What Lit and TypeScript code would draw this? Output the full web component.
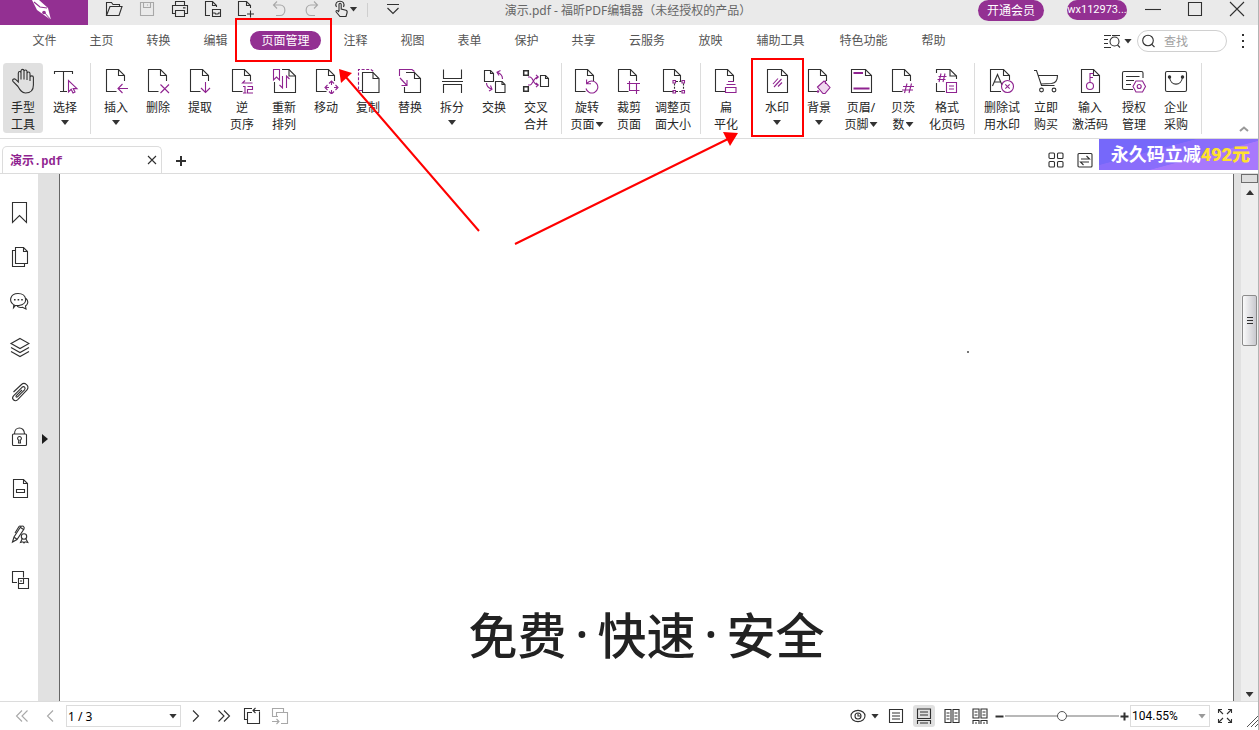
import { LitElement, html, css, svg, nothing, TemplateResult, SVGTemplateResult } from "lit";
import { customElement, state } from "lit/decorators.js";
import { classMap } from "lit/directives/class-map.js";

type Art = SVGTemplateResult;

const icon = (w: number, h: number, art: Art): TemplateResult =>
  html`<svg class="ic" width=${w} height=${h} viewBox="0 0 ${w} ${h}" aria-hidden="true">${art}</svg>`;

/* Sheet of paper whose lower right corner is left open for a badge. */
const openDoc = (x = 4.5, right = x + 18): Art => svg`
  <path d="M${x + 10} 23.5H${x}V1.5H${right - 6}L${right} 7.5V13"/>
  <path d="M${right - 6} 1.5V7.5H${right}"/>`;

/* Closed sheet of paper with a folded corner. */
const doc = (x: number, y: number, w: number, h: number, f = 6): Art => svg`
  <path d="M${x} ${y}H${x + w - f}L${x + w} ${y + f}V${y + h}H${x}Z"/>
  <path d="M${x + w - f} ${y}V${y + f}H${x + w}"/>`;

const art: Record<string, Art> = {
  hand: svg`<path d="M9 18.5L4.2 13.6C2.6 11.6 5 10 6.6 11.4L9.3 14V5.2C9.3 3 12 3 12 5.2V11.5V3.2C12 .8 15 .8 15 3.2V11.5V3.6C15 1.4 18 1.4 18 3.6V12V5.8C18 3.4 21 3.6 21 5.8V13V9.4C21 7.4 24.4 7.4 24.4 9.4V17C24.4 22 21.5 25 16.5 25C12.5 25 11 22 9 18.5Z"/>`,
  select: svg`<path d="M3.5 6V3.5H21.5V6M12.5 3.5V23.5M9 23.5H16"/><path class="p" d="M17.5 12.5V24L20.2 21.3L22 25L24 24L22.2 20.6H26Z"/>`,
  insert: svg`${openDoc()}<path class="p" d="M26 20.5H16M20.5 16L16 20.5L20.5 25"/>`,
  remove: svg`${openDoc()}<path class="p" d="M16.5 16.5L25 25M25 16.5L16.5 25"/>`,
  extract: svg`${openDoc()}<path class="p" d="M19.5 14V24.5M15 20L19.5 24.5L24 20"/>`,
  reverse: svg`${openDoc()}<path class="p" d="M17 12.5L14.5 15H24.5M15 18.5H17V25M15 25H18.5M19.5 18.5H24.5V21.5H19.5V25H25"/>`,
  reorder: svg`<path d="M12 1.5H19L25.5 8V24.5H4.5V14"/><path d="M19 1.5V8H25.5"/><path class="p" d="M3.5 1.5H9.5V12L6.5 9L3.5 12ZM12.5 8V20L9.5 17M16.5 20V8L19.5 11"/>`,
  move: svg`${openDoc()}<path class="p" d="M17 15.5L19.5 13L22 15.5M17 23.5L19.5 26L22 23.5M15.5 17L13 19.5L15.5 22M23.5 17L26 19.5L23.5 22M19.5 14V17M19.5 22V25M14 19.5H17M22 19.5H25"/>`,
  copy: svg`<path class="p" stroke-dasharray="3 1.6" d="M8 22.5H4.5V1.5H17L20 4"/>${doc(8.5, 4.5, 16.5, 20)}`,
  replace: svg`<path d="M10 4.5H18.5L24.5 10.5V24.5H8.5V19"/><path d="M18.5 4.5V10.5H24.5"/><path class="p" d="M3.5 8V1.5H16L18.5 3.5M4 10L11 17.5M11 12V17.5H5.5"/>`,
  split: svg`<path d="M5.5 1.5V10.5H23.5V1.5M4 13.5H25M5.5 25V16.5H23.5V25"/>`,
  swap: svg`${doc(4.5, 2.5, 9, 11, 3)}${doc(15.5, 13.5, 9.5, 11, 3)}<path class="p" d="M22.5 11C22.5 7.5 20.5 5.5 17.5 4.5M20.5 2.5L17 4.3L19 7.5M6.5 15C6.5 18 8.5 20 11.5 21M9 23L12 21.2L10.5 17.5"/>`,
  cross: svg`<path stroke-width="1.5" d="M1.7 2.7H6.3V7.3H1.7ZM1.7 18.7H6.3V23.3H1.7Z"/><path class="p" d="M6 9H8C11 9 11.5 17 16 17M6 17H8C11 17 11.5 9 16 9M14 6.8L16.3 9L14 11.2M14 14.8L16.3 17L14 19.2"/>${doc(18.5, 7.5, 8, 11, 3)}`,
  rotate: svg`${openDoc(2.5)}<path class="p" d="M14.2 15.2A6 6 0 1 1 13 20.5M13.6 11.5V15.8H18"/>`,
  crop: svg`${openDoc(3.5)}<path class="p" d="M12 15.5H21.5V26M14.5 13V22.5H24.5M21.5 15.5H25"/>`,
  resize: svg`${openDoc(4.5, 21.5)}<path class="p" d="M14 12.5H16.5V15H14ZM23 12.5H25.5V15H23ZM14 22.5H16.5V25H14ZM23 22.5H25.5V25H23Z"/><path stroke-dasharray="2 1.3" d="M17 13.5H23M17 23.5H23M15.5 15.5V22M24.5 15.5V22"/>`,
  flatten: svg`${openDoc(3.5)}<path class="p" d="M16 13.5H22M14.5 16.5H23.5M14.5 19.5H24V24.5H13.5V19.5Z"/>`,
  watermark: svg`${doc(4.5, 1.5, 20, 23)}<path class="p" d="M10 16L15 10.5M11 19L18.5 11M15 18.5L19 14.5"/>`,
  background: svg`${openDoc(3.5)}<path class="p" fill="#f0d8f0" d="M12.5 19L19 13L25 19.5L20 25.5H18Z"/><path class="p" d="M20.5 12.5V16"/><circle class="pf" cx="13" cy="23.5" r="1.2"/>`,
  header: svg`${doc(4.5, 1.5, 20, 23)}<path class="p" stroke-width="2" d="M6.5 5H16M6.5 20.5H22.5"/>`,
  bates: svg`${openDoc(3.5)}<path class="p" d="M18 15.5L15.5 25M22.5 15.5L20 25M14 18.5H25M13 22H24"/>`,
  pagefmt: svg`<path d="M3.5 15V23.5H12M14 1.5H17L23.5 8V11M3.5 5V1.5H16"/><path d="M17 1.5V8H23.5"/><path class="p" d="M8 5.5L6 14M12 5.5L10 14M5.5 8.5H13.5M4.5 11.5H12.5M13.5 14.5H23.5V24.5H13.5ZM16 18H21M16 21H21"/>`,
  delmark: svg`<path d="M13 23.5H2.5V1.5H15.5L21.5 7.5V12"/><path d="M15.5 1.5V7.5H21.5M4.5 18L9.5 6.5L14 17M6 14H12.5"/><circle class="p" cx="19.5" cy="18.5" r="6"/><path class="p" d="M17.3 16.3L21.7 20.7M21.7 16.3L17.3 20.7"/>`,
  cart: svg`<path d="M2 2.5H4.5L9.5 17.5H22.5M5.8 7.5H25.5C25.5 12 23.5 15 19.5 15.5L9 16"/><circle cx="9.5" cy="22" r="1.9"/><circle cx="22" cy="22" r="1.9"/>`,
  code: svg`${doc(5.5, 1.5, 18, 23)}<circle class="p" cx="14" cy="18" r="3.5"/><path class="p" d="M14 14.5V5.5H17.5M14 9.5H17"/>`,
  license: svg`<path d="M13 21.5H4C3 21.5 2.5 21 2.5 20V5C2.5 4 3 3.5 4 3.5H21.5C22.5 3.5 23 4 23 5V10M6 8.5H19.5M6 12.5H14M6 16.5H11"/><path class="p" d="M13 18.5L16 13H22.5L25.5 18.5L22.5 24H16Z"/><circle class="p" cx="19.2" cy="18.5" r="2"/>`,
  shop: svg`<rect x="3.5" y="3.5" width="21" height="20" rx="1.5"/><path d="M7.5 9C8.5 18.5 19.5 18.5 20.5 9"/><circle class="kf" cx="7.5" cy="9" r="1.2"/><circle class="kf" cx="20.5" cy="9" r="1.2"/>`,
};

interface Tool {
  icon: string;
  a: string;
  b?: string;
  menu?: boolean;
  wide?: boolean;
  apart?: boolean;
}

const groups: Tool[][] = [
  [{ icon: "hand", a: "手型", b: "工具" }, { icon: "select", a: "选择", menu: true }],
  [
    { icon: "insert", a: "插入", menu: true },
    { icon: "remove", a: "删除" },
    { icon: "extract", a: "提取" },
    { icon: "reverse", a: "逆", b: "页序" },
    { icon: "reorder", a: "重新", b: "排列" },
    { icon: "move", a: "移动" },
    { icon: "copy", a: "复制" },
    { icon: "replace", a: "替换" },
    { icon: "split", a: "拆分", menu: true },
    { icon: "swap", a: "交换" },
    { icon: "cross", a: "交叉", b: "合并" },
  ],
  [
    { icon: "rotate", a: "旋转", b: "页面", menu: true },
    { icon: "crop", a: "裁剪", b: "页面" },
    { icon: "resize", a: "调整页", b: "面大小", wide: true },
  ],
  [
    { icon: "flatten", a: "扁", b: "平化" },
    { icon: "watermark", a: "水印", menu: true, apart: true },
    { icon: "background", a: "背景", menu: true },
    { icon: "header", a: "页眉/", b: "页脚", menu: true },
    { icon: "bates", a: "贝茨", b: "数", menu: true },
    { icon: "pagefmt", a: "格式", b: "化页码", wide: true },
  ],
  [
    { icon: "delmark", a: "删除试", b: "用水印", wide: true },
    { icon: "cart", a: "立即", b: "购买" },
    { icon: "code", a: "输入", b: "激活码", wide: true },
    { icon: "license", a: "授权", b: "管理" },
    { icon: "shop", a: "企业", b: "采购" },
  ],
];

const menus = ["文件", "主页", "转换", "编辑", "页面管理", "注释", "视图", "表单", "保护", "共享", "云服务", "放映", "辅助工具", "特色功能", "帮助"];

const quick: { label: string; dim?: boolean; art: Art }[] = [
  { label: "打开", art: svg`<path d="M1.5 15.5V2.5H6.5L8 4.5H14.5V6.5M1.5 15.5L5 6.5H17L14 15.5Z"/>` },
  { label: "保存", dim: true, art: svg`<path d="M2.5 2.5H15.5V15.5H2.5ZM5.5 2.5V7.5H12.5V2.5M9.5 4.5V5.5"/>` },
  { label: "打印", art: svg`<path d="M4.5 5.5V1.5H13.5V5.5M4.5 13.5H1.5V5.5H16.5V13.5H13.5M4.5 10.5H13.5V16.5H4.5ZM12 7.9H14.5"/>` },
  { label: "页面预览", art: svg`<path d="M6 15.5H1.5V1.5H8.5L12.5 5.5V7M8.5 1.5V5.5H12.5M8.5 9.5H16.5V16.5H8.5ZM8.5 13H11L11.5 14H14L14.5 13H16.5"/>` },
  { label: "新建", art: svg`<path d="M9 15.5H1.5V1.5H9.5L13.5 5.5V8M9.5 1.5V5.5H13.5M13.5 10.5V17.5M10 14H17"/>` },
  { label: "撤销", dim: true, art: svg`<path d="M7 1.5L3.5 5L7 8.5M3.5 5H10C16.5 5 16.5 15.5 10 15.5H6"/>` },
  { label: "重做", dim: true, art: svg`<path d="M11 1.5L14.5 5L11 8.5M14.5 5H8C1.5 5 1.5 15.5 8 15.5H12"/>` },
];

const panels: { label: string; art: Art }[] = [
  { label: "书签", art: svg`<path d="M3.5 1.5H17.5V21.5L10.5 14.5L3.5 21.5Z"/>` },
  { label: "页面", art: svg`<path d="M6.5 1.5H14.5L18.5 5.5V17.5H6.5ZM14.5 1.5V5.5H18.5M6 4.5H3.5V20.5H15.5V18"/>` },
  { label: "注释", art: svg`<path d="M6 14.5C-1.5 10.5 1.5 2.5 9 2.5C18.5 2.5 19.5 13.5 10 14.5L6.5 14.5L4.5 16.8L4.8 13.9M17 7.5C20.5 11 18 14 16.5 15L17 18L13.5 16.3C11 16.8 9 16.2 8 15.2"/><path stroke-width="1.6" stroke-dasharray="1.6 2" d="M5 8.7H14"/>` },
  { label: "图层", art: svg`<path d="M11 2.5L20 7.5L11 12.5L2 7.5ZM2 11.5L11 16.5L20 11.5M2 15.5L11 20.5L20 15.5"/>` },
  { label: "附件", art: svg`<path d="M4.5 11L12.5 3.5C15.5 .8 21 4.5 18 9L8.5 18.8C5.5 21.3 2 17.5 4.5 14.8L13 6.3C15.2 4.6 17 7 15.5 8.8L8.5 15.8C7.3 16.6 6.5 15.5 7.3 14.5L13 9"/>` },
  { label: "安全", art: svg`<rect x="3.5" y="8" width="14" height="11.5" rx="1"/><path d="M5.5 8C5.5 0 15.5 0 15.5 8M9.5 17H11.5L11.2 14.2A1.9 1.9 0 1 0 9.8 14.2Z"/>` },
  { label: "表单", art: svg`<path d="M4.5 2.5H14.5L18.5 6.5V20.5H4.5ZM14.5 2.5V6.5H18.5M7.5 12.5H15.5V15.5H7.5Z"/>` },
  { label: "签名", art: svg`<path d="M3.5 19L5 14L11.5 4C13 2 16 3.5 15 6L8 16.5ZM6 10L10 3.5C10.5 2.8 11.5 3 12 3.3M5.5 14.5L8 16.2M11.5 4.5L14.5 6.5"/><circle cx="15" cy="13.5" r="2.7"/><path d="M13.2 15.8L11.5 19.5L14 18.8L15 20L16 18.8L18.8 19.5L16.8 15.8"/>` },
  { label: "比较", art: svg`<path d="M8 13.5H3.5V2.5H14.5V8.5M9.5 9.5H19.5V19.5H9.5ZM9.5 14.5H14.5V9.5M11 12H13"/>` },
];

@customElement("app-root")
export class AppRoot extends LitElement {
  @state() private active = "页面管理";

  static styles = css`
    :host {
      display: flex;
      flex-direction: column;
      position: relative;
      box-sizing: border-box;
      height: 100vh;
      overflow: hidden;
      background: #fff;
      border-right: 1px solid #b4b4b4;
      color: #262626;
      font: 12px/17px "Noto Sans", "Noto Sans CJK SC", sans-serif;
    }
    * { box-sizing: border-box; }
    button, input, select {
      font: inherit;
      color: inherit;
      margin: 0;
      padding: 0;
      border: 0;
      background: none;
    }
    button { cursor: pointer; }
    .ic { display: block; flex: none; fill: none; stroke: #303030; stroke-width: 1.1; }
    .dim .ic { stroke: #a8a8a8; }
    .p { stroke: #8f2390; }
    .pf { fill: #8f2390; stroke: none; }
    .kf { fill: #303030; }
    .tri {
      flex: none;
      width: 8px;
      height: 5px;
      background: #333;
      clip-path: polygon(0 0, 100% 0, 50% 100%);
    }

    .titlebar {
      display: grid;
      grid-template-columns: 1fr auto 1fr;
      flex: none;
      height: 25px;
      background: #eaeaea;
    }
    .quick, .winctl { display: flex; align-items: flex-start; }
    .logo { flex: none; width: 88px; height: 25px; margin-right: 9px; background: #933092; display: block; }
    .q { display: flex; align-items: center; justify-content: center; width: 33px; height: 18px; }
    .touch { gap: 0; }
    .vr { width: 1px; height: 14px; margin: 3px 8px 0 6px; background: #cfcfcf; }
    .title { margin: 0; padding: 2px 2px 0 0; color: #666; font-size: 12px; font-weight: 400; white-space: nowrap; }
    .winctl { justify-content: flex-end; }
    .pill { color: #fff; background: #933092; border-radius: 11px; height: 21px; white-space: nowrap; }
    .vip { width: 66px; margin-right: 23px; }
    .user {
      width: 60px;
      height: 20px;
      margin-right: 5px;
      border-radius: 10px;
      font: 11px/18px Roboto, sans-serif;
    }
    .w { width: 42px; height: 18px; display: flex; align-items: center; justify-content: center; }

    .menubar { display: flex; align-items: center; flex: none; height: 32px; padding-left: 16px; color: #555; }
    .m { width: 57px; height: 19px; margin-bottom: 1px; text-align: center; white-space: nowrap; }
    .m3 { width: 70px; }
    .m4 { width: 83px; }
    .m span { display: inline-block; line-height: 19px; }
    .m.on span { padding: 0 11px; border-radius: 10px; background: #933092; color: #fff; }
    .find { display: flex; align-items: center; margin-left: auto; padding-right: 13px; }
    .find .tri { margin: 0 5px 0 3px; }
    .search {
      display: flex;
      align-items: center;
      width: 90px;
      height: 22px;
      padding-left: 4px;
      gap: 8px;
      border: 1px solid #d0d0d0;
      border-radius: 11px;
    }
    .search input { width: 48px; outline: 0; }
    .search input::placeholder { color: #a0a0a0; opacity: 1; }
    .more { display: flex; width: 4px; margin-left: 14px; }

    .ribbon {
      display: flex;
      flex: none;
      height: 82px;
      padding: 6px 0 0 2px;
      border-bottom: 1px solid #dcdcdc;
    }
    .group { display: flex; }
    .group::after { content: ""; width: 1px; height: 71px; margin: 0 4px; background: #dcdcdc; }
    .tool {
      display: flex;
      flex-direction: column;
      align-items: center;
      width: 42px;
      height: 70px;
      padding-top: 5px;
      border: solid transparent;
      border-width: 0 1px;
      border-radius: 4px;
      background-clip: padding-box;
      white-space: nowrap;
    }
    .wide { width: 46px; }
    .apart { margin-left: 9px; }
    .on.tool { background-color: #e0e0e0; }
    .tool .ic { margin-bottom: 5px; }
    .second { display: flex; align-items: center; gap: 1px; height: 17px; }
    .second.bare { height: 13px; }
    .collapse { margin: auto 9px 6px auto; }
    .collapse .ic { stroke: #999; stroke-width: 2; }

    .tabs { display: flex; align-items: flex-end; flex: none; height: 35px; padding-left: 2px; border-bottom: 1px solid #dcdcdc; }
    .tab {
      display: flex;
      align-items: center;
      justify-content: space-between;
      width: 160px;
      height: 27px;
      padding: 0 4px 0 7px;
      border: 1px solid #dcdcdc;
      border-bottom: 0;
      border-radius: 5px 5px 0 0;
      color: #8f2390;
      font: bold 12px/17px "Liberation Mono", "Noto Sans CJK SC", monospace;
    }
    .tab span { padding-top: 4px; }
    .add { margin: 0 0 7px 13px; }
    .add .ic { stroke-width: 2; }
    .tabtools { display: flex; align-self: stretch; margin-left: auto; align-items: center; gap: 13px; }
    .tabtools button { padding-top: 7px; }
    .promo {
      align-self: flex-start;
      margin-left: -7px;
      padding: 0 8px 0 12px;
      color: #fff;
      text-decoration: none;
      background: linear-gradient(165deg, #7668fa 0 35%, #8a6dfb 36% 60%, #a878fc 61% 100%);
      font: bold 18px/31px Roboto, "Noto Sans CJK SC", sans-serif;
      white-space: nowrap;
    }
    .promo b { color: #ffe12e; }

    .work { display: flex; flex: 1; min-height: 0; }
    .side { display: flex; flex-direction: column; flex: none; width: 38px; padding-top: 16px; }
    .side button { display: flex; align-items: center; height: 45px; padding-left: 9px; flex: none; }
    .side button:nth-child(n + 7) { height: 46px; }
    .side button:nth-child(7) { margin-top: 5px; }
    .gutter { display: flex; align-items: center; flex: none; width: 22px; padding: 3px 0 0 4px; background: #e1e1e1; border-right: 1px solid #666; }
    .open { width: 6px; height: 10px; background: #1c1c1c; clip-path: polygon(0 0, 100% 50%, 0 100%); }
    .page { flex: 1; overflow: hidden; display: flex; flex-direction: column; padding-top: 177px; background: #fff; }
    .speck { width: 2px; height: 2px; margin-left: 907px; background: #777; flex: none; }
    .slogan {
      display: flex;
      justify-content: center;
      margin: 255px 0 0;
      color: #222;
      font: 500 49px/50px "Noto Sans CJK SC", sans-serif;
    }
    .dot { width: 31px; text-align: center; font-family: "Noto Sans", sans-serif; }
    .edge { flex: none; width: 8px; background: #e1e1e1; border-left: 1px solid #666; }
    .scroll { display: flex; flex-direction: column; align-items: center; flex: none; width: 17px; background: #eee; }
    .splitter { width: 17px; height: 9px; border: 1px solid #6e6e6e; background: #dedede; }
    .scroll .tri { margin-bottom: 4px; }
    .scroll .up { margin: 7px 0 0; transform: rotate(180deg); }
    .thumb {
      display: flex;
      align-items: center;
      justify-content: center;
      width: 15px;
      height: 51px;
      margin: 100px 0 auto;
      border: 1px solid #8c8c8c;
      border-radius: 2px;
      background: linear-gradient(90deg, #fafafa, #c9c9cf);
    }

    .status { display: flex; align-items: center; flex: none; height: 29px; border-top: 1px solid #dcdcdc; }
    .nav, .view { display: flex; align-items: center; }
    .s { display: flex; align-items: center; justify-content: center; width: 28px; height: 22px; }
    .nav { padding-left: 8px; }
    .box { display: grid; align-items: center; height: 22px; border: 1px solid #dcdcdc; color: #000; }
    .box > * { grid-area: 1 / 1; }
    .box select { appearance: none; width: 100%; height: 20px; padding-left: 1px; outline: 0; font-size: 12px; }
    .box .tri { justify-self: end; margin-right: 3px; pointer-events: none; }
    .pageno { width: 115px; margin: 0 1px 0 2px; }
    .zoomno { width: 80px; font-family: Roboto, sans-serif; }
    .zoomno .tri { background: #999; }
    .view { margin-left: auto; }
    .eye { display: flex; align-items: center; gap: 5px; margin-right: 3px; }
    .mode { width: 22px; margin: 0 3px; border-radius: 3px; }
    .mode.on { background: #e0e0e0; }
    .step { width: 11px; height: 22px; display: flex; align-items: center; justify-content: center; }
    .step .ic { stroke-width: 2; }
    .slider { appearance: none; width: 114px; height: 22px; outline: 0; }
    .slider::-webkit-slider-runnable-track { height: 2px; background: #b8b8b8; }
    .slider::-webkit-slider-thumb {
      appearance: none;
      width: 10px;
      height: 10px;
      margin-top: -4px;
      border: 1px solid #555;
      border-radius: 50%;
      background: #fff;
    }
    .full { width: 30px; }
    .grip { align-self: flex-end; margin-left: 6px; }
    .grip .ic { stroke: #555; stroke-width: 1; }

    .marks { position: absolute; left: 0; top: 0; pointer-events: none; fill: none; stroke: #f00; stroke-width: 2; }
    .marks polygon { fill: #f00; stroke: none; }
  `;

  private tool(t: Tool) {
    return html`<button
      class=${classMap({ tool: true, wide: !!t.wide, apart: !!t.apart, on: t.icon === "hand" })}
    >
      ${icon(28, 26, art[t.icon])}
      <span>${t.a}</span>
      ${t.b || t.menu
        ? html`<span class=${classMap({ second: true, bare: !t.b })}
            >${t.b ?? nothing}${t.menu ? html`<i class="tri"></i>` : nothing}</span
          >`
        : nothing}
    </button>`;
  }

  render() {
    return html`
      <header class="titlebar">
        <div class="quick">
          <svg class="logo" viewBox="0 0 88 25" aria-hidden="true">
            <path fill="#fff" d="M32 0L37 10L51 20L48 8L39 0Z" />
            <path fill="none" stroke="#933092" stroke-width="1.2" d="M34 2L40 7L47 8" />
            <circle cx="44" cy="12.5" r="1.8" fill="#933092" />
            <path stroke="#933092" d="M44 12L51 20" />
          </svg>
          ${quick.map(
            (q) => html`<button class=${classMap({ q: true, dim: !!q.dim })} aria-label=${q.label}>${icon(18, 18, q.art)}</button>`
          )}
          <button class="q touch" aria-label="触摸模式">
            ${icon(18, 18, svg`<path d="M7 11V4.5C7 2.8 9.2 2.8 9.2 4.5V9L14 10.2C15.2 10.6 15.3 12 15 13L14 16.5H8L4.2 12C3.5 10.8 4.8 10 6 11L7 12M4.5 7C2.5 3.5 5 1.2 8 1.2C11 1.2 13 3.5 11.5 7"/>`)}
            <i class="tri"></i>
          </button>
          <i class="vr"></i>
          <button class="q" aria-label="自定义">${icon(14, 12, svg`<path d="M1 1.5H13M1.5 5L7 10.5L12.5 5"/>`)}</button>
        </div>
        <h1 class="title">演示.pdf - 福昕PDF编辑器（未经授权的产品）</h1>
        <div class="winctl">
          <button class="pill vip">开通会员</button>
          <button class="pill user">wx112973...</button>
          <button class="w" aria-label="最小化">${icon(18, 16, svg`<path d="M1 8.5H17"/>`)}</button>
          <button class="w" aria-label="最大化">${icon(16, 16, svg`<path d="M1.5 1.5H14.5V14.5H1.5Z"/>`)}</button>
          <button class="w" aria-label="关闭">${icon(16, 16, svg`<path d="M1 1L15 15M15 1L1 15"/>`)}</button>
        </div>
      </header>

      <nav class="menubar">
        ${menus.map(
          (m) => html`<button
            class=${classMap({ m: true, m3: m.length === 3, m4: m.length === 4, on: m === this.active })}
            @click=${() => (this.active = m)}
          ><span>${m}</span></button>`
        )}
        <div class="find">
          <button aria-label="高级查找">
            ${icon(18, 16, svg`<path d="M1 2.5H8M1 6.5H5M1 10.5H5M1 14.5H8M9 2.5H17"/><circle cx="11.5" cy="8.5" r="4.5"/><path d="M14.5 12L17 14.5"/>`)}
          </button>
          <i class="tri"></i>
          <label class="search">
            ${icon(14, 14, svg`<circle cx="6" cy="6.5" r="5.3"/><path d="M9.8 10.3L12.5 13"/>`)}
            <input type="text" placeholder="查找" aria-label="查找" />
          </label>
          <button class="more" aria-label="更多">
            ${icon(4, 16, svg`<path stroke-width="2" stroke-dasharray="2 4" d="M2 1V15"/>`)}
          </button>
        </div>
      </nav>

      <section class="ribbon">
        ${groups.map((g) => html`<div class="group">${g.map((t) => this.tool(t))}</div>`)}
        <button class="collapse" aria-label="折叠">${icon(10, 6, svg`<path d="M1 5L5 1.5L9 5"/>`)}</button>
      </section>

      <div class="tabs">
        <div class="tab">
          <span>演示.pdf</span>
          <button aria-label="关闭标签">${icon(10, 10, svg`<path d="M1 1L9 9M9 1L1 9"/>`)}</button>
        </div>
        <button class="add" aria-label="新标签">${icon(12, 10, svg`<path d="M1 5H11M6 0V10"/>`)}</button>
        <div class="tabtools">
          <button aria-label="缩略图">
            ${icon(16, 16, svg`<rect x="1" y="1" width="5.5" height="5.5" rx="1"/><rect x="9.5" y="1" width="5.5" height="5.5" rx="1"/><rect x="1" y="9.5" width="5.5" height="5.5" rx="1"/><rect x="9.5" y="9.5" width="5.5" height="5.5" rx="1"/>`)}
          </button>
          <button aria-label="切换">
            ${icon(16, 16, svg`<rect x="1" y="1.5" width="14" height="13.5" rx="1"/><path d="M4 7H12.5L9.5 4M12 10H3.5L6.5 13"/>`)}
          </button>
          <a class="promo" href="#promo">永久码立减<b>492元</b></a>
        </div>
      </div>

      <main class="work">
        <aside class="side">
          ${panels.map((p) => html`<button aria-label=${p.label}>${icon(21, 23, p.art)}</button>`)}
        </aside>
        <div class="gutter"><button class="open" aria-label="展开面板"></button></div>
        <article class="page">
          <i class="speck"></i>
          <p class="slogan">
            <span>免费</span><span class="dot">·</span><span>快速</span><span class="dot">·</span><span>安全</span>
          </p>
        </article>
        <div class="edge"></div>
        <div class="scroll">
          <i class="splitter"></i>
          <i class="tri up"></i>
          <div class="thumb">${icon(8, 9, svg`<path d="M1 1.5H7M1 4.5H7M1 7.5H7"/>`)}</div>
          <i class="tri"></i>
        </div>
      </main>

      <footer class="status">
        <div class="nav">
          <button class="s dim" aria-label="首页">${icon(14, 14, svg`<path d="M7 1.5L1.5 7L7 12.5M12.5 1.5L7 7L12.5 12.5"/>`)}</button>
          <button class="s dim" aria-label="上一页">${icon(8, 14, svg`<path d="M7 1.5L1.5 7L7 12.5"/>`)}</button>
          <label class="box pageno">
            <select aria-label="页码"><option>1 / 3</option></select>
            <i class="tri"></i>
          </label>
          <button class="s" aria-label="下一页">${icon(8, 14, svg`<path d="M1 1.5L6.5 7L1 12.5"/>`)}</button>
          <button class="s" aria-label="末页">${icon(14, 14, svg`<path d="M1.5 1.5L7 7L1.5 12.5M7 1.5L12.5 7L7 12.5"/>`)}</button>
          <button class="s" aria-label="上一视图">${icon(18, 18, svg`<path d="M4 12.5H1.5V1.5H9M16.5 4.5V16.5H4.5V5.5H9M17 3.5H10M12.5 1L10 3.5L12.5 6"/>`)}</button>
          <button class="s dim" aria-label="下一视图">${icon(18, 18, svg`<path d="M7 9.5H1.5V1.5H12.5V5.5M5.5 9.5V5.5H16.5V16.5H10M1 14.5H8M5.5 12L8 14.5L5.5 17"/>`)}</button>
        </div>
        <div class="view">
          <button class="eye" aria-label="阅读模式">
            ${icon(16, 14, svg`<ellipse cx="8" cy="7" rx="7" ry="5.6"/><circle cx="8" cy="7" r="3"/><path d="M8 4.5V7H10.5"/>`)}
            <i class="tri"></i>
          </button>
          <button class="s mode" aria-label="单页">${icon(16, 16, svg`<path d="M1.5 1.5H14.5V14.5H1.5ZM4 5H12M4 8H12M4 11H12"/>`)}</button>
          <button class="s mode on" aria-label="连续">${icon(16, 16, svg`<path d="M1.5 1V10.5H14.5V1ZM4 4H12M4 7H12M1.5 16V12.5H14.5V16M4 15H12"/>`)}</button>
          <button class="s mode" aria-label="双页">${icon(16, 16, svg`<path d="M1 1.5H7V14.5H1ZM9 1.5H15V14.5H9ZM2.5 5H5.5M2.5 8H5.5M2.5 11H5.5M10.5 5H13.5M10.5 8H13.5M10.5 11H13.5"/>`)}</button>
          <button class="s mode" aria-label="双页连续">${icon(16, 16, svg`<path d="M1 1H7V10H1ZM9 1H15V10H9ZM2.5 4H5.5M2.5 7H5.5M10.5 4H13.5M10.5 7H13.5M1 16V12.5H7V16M9 16V12.5H15V16M3 15H5M11 15H13"/>`)}</button>
          <button class="step" aria-label="缩小">${icon(9, 9, svg`<path d="M0.5 4.5H8.5"/>`)}</button>
          <input class="slider" type="range" min="0" max="100" value="50" aria-label="缩放" />
          <button class="step" aria-label="放大">${icon(9, 9, svg`<path d="M0.5 4.5H8.5M4.5 0.5V8.5"/>`)}</button>
          <label class="box zoomno">
            <select aria-label="缩放比例"><option>104.55%</option></select>
            <i class="tri"></i>
          </label>
          <button class="s full" aria-label="全屏">${icon(16, 16, svg`<path d="M1.5 5V1.5H5M1.5 1.5L6 6M11 1.5H14.5V5M14.5 1.5L10 6M1.5 11V14.5H5M1.5 14.5L6 10M11 14.5H14.5V11M14.5 14.5L10 10"/>`)}</button>
          <span class="grip">${icon(12, 12, svg`<path d="M1 12L12 1M5 12L12 5M9 12L12 9"/>`)}</span>
        </div>
      </footer>

      <svg class="marks" width="820" height="250" aria-hidden="true">
        <rect x="236" y="19" width="95" height="42" />
        <rect x="752" y="59" width="51" height="77" />
        <path d="M345 76L479 231M515 244L730 138" />
        <polygon points="339,69 352,73 341,83" />
        <polygon points="738,133 723,132 730,146" />
      </svg>
    `;
  }
}
